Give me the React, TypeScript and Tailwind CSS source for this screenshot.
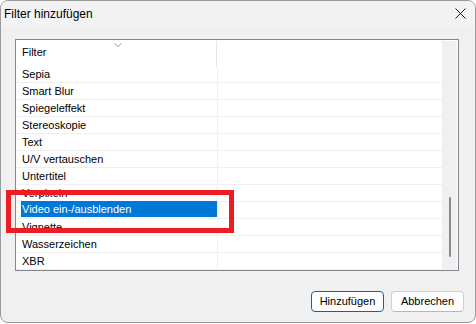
import React from 'react';

const filters = [
    'Sepia',
    'Smart Blur',
    'Spiegeleffekt',
    'Stereoskopie',
    'Text',
    'U/V vertauschen',
    'Untertitel',
    'Verpixeln',
    'Video ein-/ausblenden',
    'Vignette',
    'Wasserzeichen',
    'XBR',
];

const selected = 'Video ein-/ausblenden';

export default function App() {
    return (
        <div
            className="relative w-[476px] h-[324px] bg-white overflow-hidden text-black"
            style={{ fontFamily: '"Liberation Sans", Arial, sans-serif' }}
        >
            <div className="w-[476px] h-[323px] rounded-[8px] border border-[#9b9b9b] bg-[#f0f0f0] flex flex-col overflow-hidden">
                {/* title bar */}
                <div className="h-[25px] flex items-center justify-between pl-[3px] pr-[9px] bg-[#f3f3f3]">
                    <span className="text-[12px] leading-none">Filter hinzufügen</span>
                    <svg width="11" height="11" viewBox="0 0 11 11">
                        <path d="M0.5 0.5L10.5 10.5M10.5 0.5L0.5 10.5" stroke="#1a1a1a" strokeWidth="1" />
                    </svg>
                </div>

                <div className="pt-[13px] pl-[14px]">
                    <div className="w-[444px] h-[232px] border border-[#82878f] bg-white flex">
                        <div className="flex-1 flex flex-col">
                            {/* header */}
                            <div className="h-[26px] flex">
                                <div className="relative w-[201px] mt-px pb-[3px] border-r border-[#e5e5e5] flex items-center">
                                    <svg className="absolute left-[98px] top-[2px]" width="8" height="4" viewBox="0 0 8 4">
                                        <path d="M0.5 0.5L4 3.5L7.5 0.5" fill="none" stroke="#a0a0a0" strokeWidth="1" />
                                    </svg>
                                    <span className="pl-[6px] text-[11px] leading-[14px]">Filter</span>
                                </div>
                                <div className="flex-1" />
                            </div>
                            {/* rows */}
                            {filters.map((f) => (
                                <div key={f} className="h-[17px] flex border-b border-[#f0f0f0]">
                                    <div className="w-[202px] border-r border-[#f0f0f0] flex items-start">
                                        {f === selected ? (
                                            <div className="ml-[5px] -mt-px w-[196px] h-[16px] bg-[#0078d7] text-white pl-[1px] text-[11px] leading-[16px]">
                                                {f}
                                            </div>
                                        ) : (
                                            <div className="pl-[6px] text-[11px] leading-[16px]">{f}</div>
                                        )}
                                    </div>
                                    <div className="flex-1" />
                                </div>
                            ))}
                        </div>
                        {/* scrollbar */}
                        <div className="w-[15px] mt-px mr-px bg-[#f0f0f0] flex flex-col">
                            <div className="mt-[156px] mx-auto w-[2px] h-[60px] rounded-full bg-[#8b8b8b]" />
                        </div>
                    </div>
                </div>

                <div className="mt-[20px] pr-[11px] flex justify-end gap-[7px]">
                    <button className="w-[73px] h-[21px] rounded-[4px] border border-[#0067c0] bg-[#fdfdfd] text-[11px] leading-none">
                        Hinzufügen
                    </button>
                    <button className="w-[73px] h-[21px] rounded-[4px] border border-[#d0d0d0] border-b-[#b8b8b8] bg-[#fdfdfd] text-[11px] leading-none">
                        Abbrechen
                    </button>
                </div>
            </div>

            {/* red annotation frame */}
            <div className="absolute left-[6px] top-[190px] w-[228px] h-[43px] border-[5px] border-[#ed1c24]" />
        </div>
    );
}
